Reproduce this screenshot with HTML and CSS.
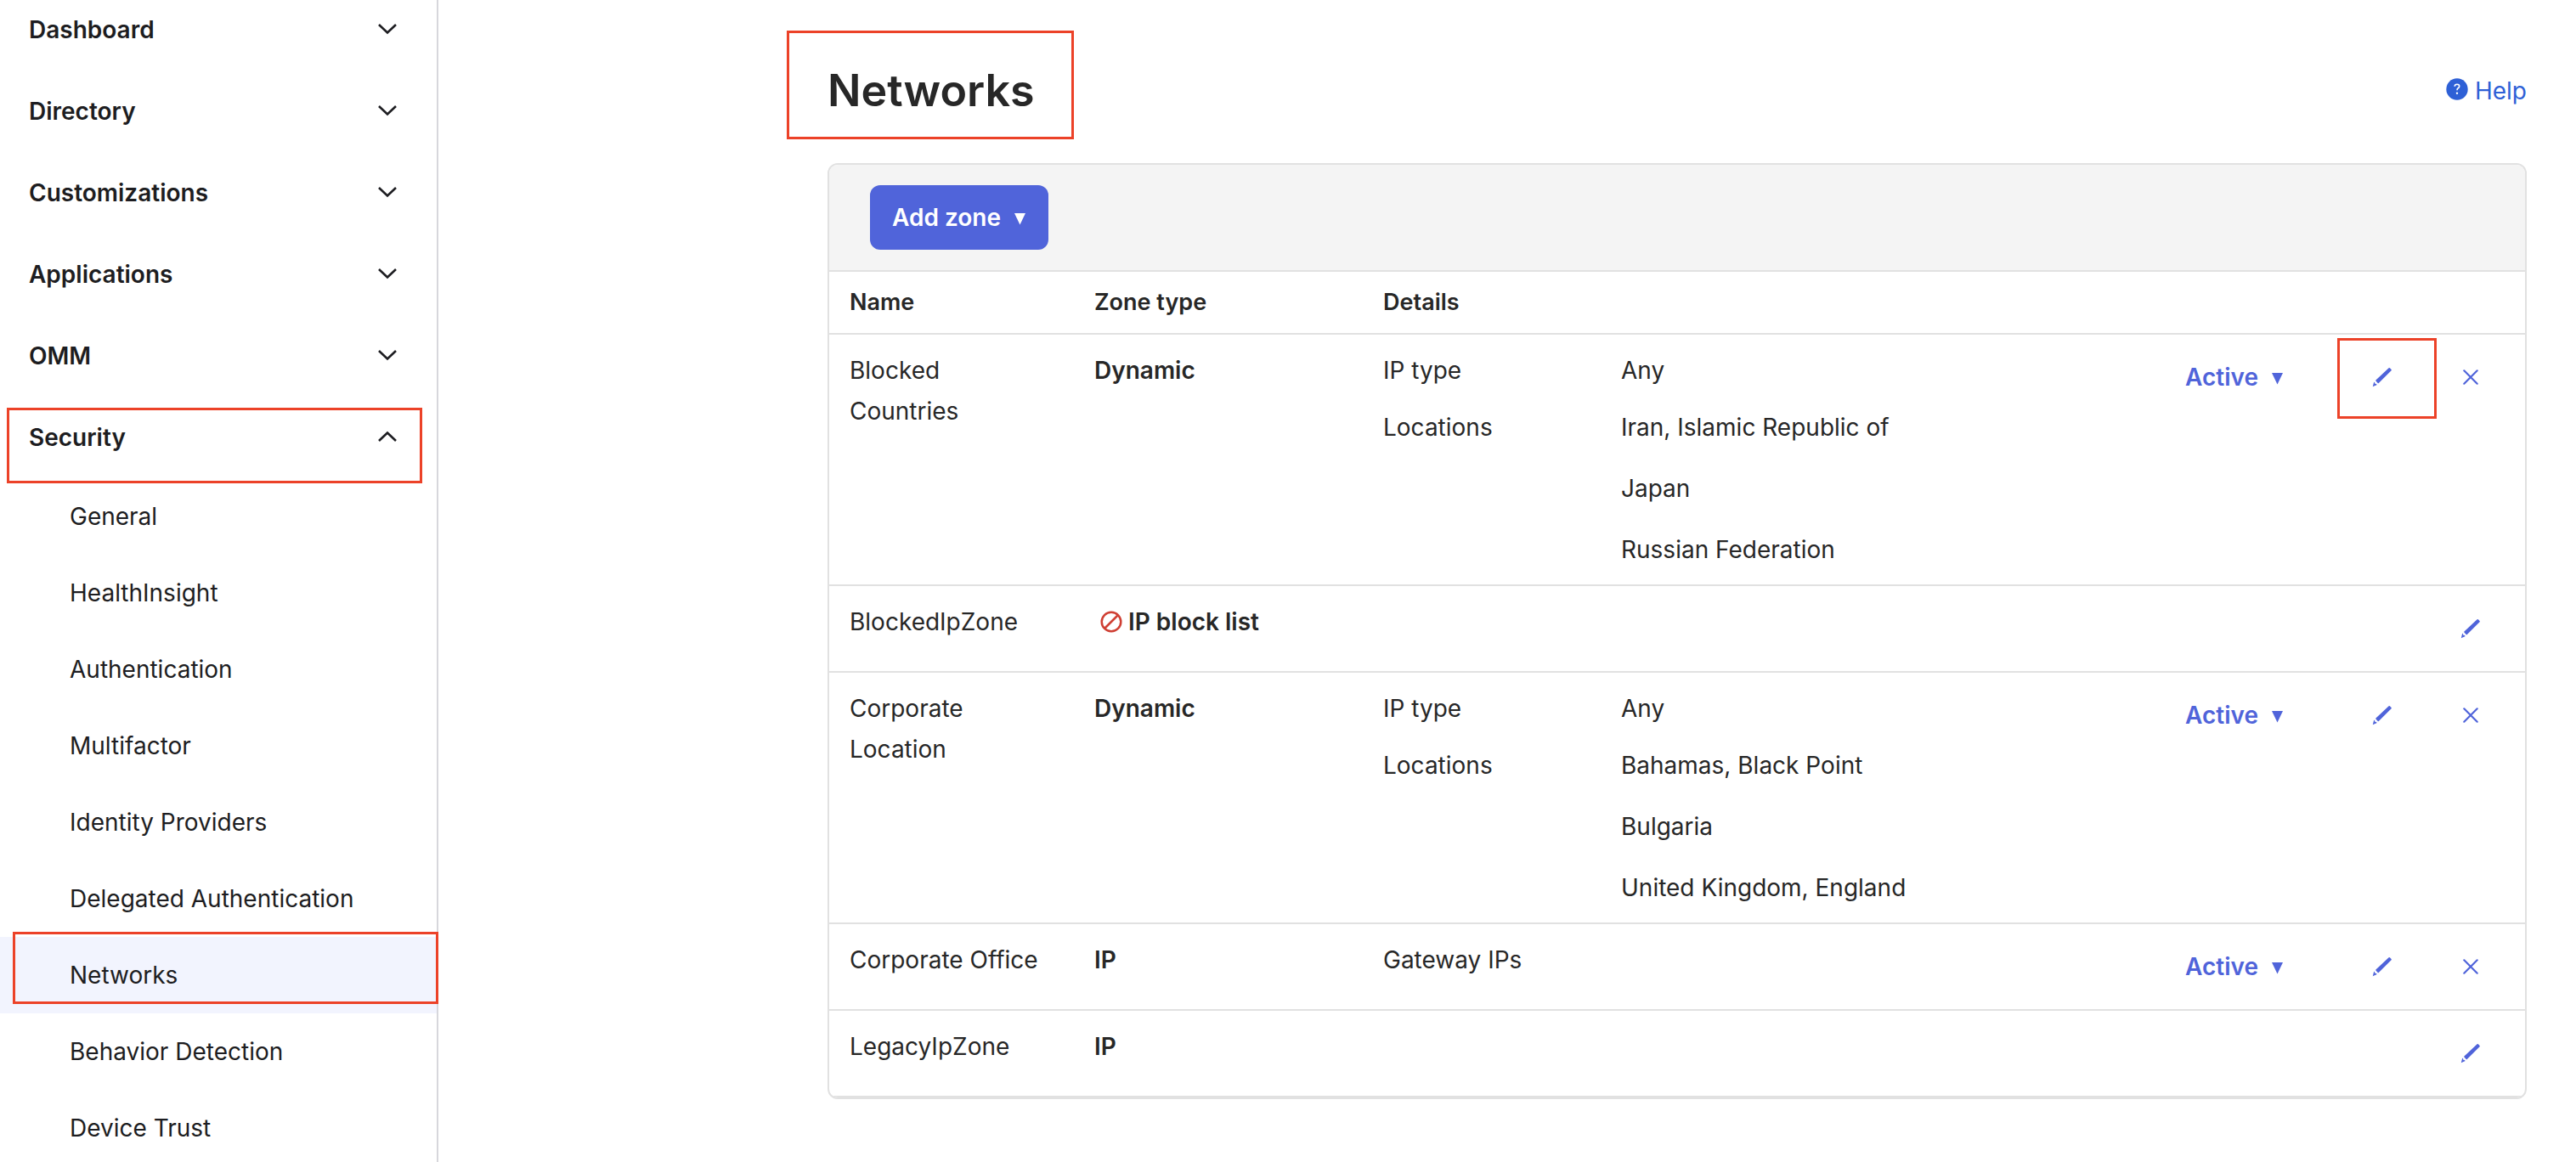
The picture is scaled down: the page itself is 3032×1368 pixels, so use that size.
FILE: index.html
```
<!DOCTYPE html>
<html lang="en">
<head>
<meta charset="UTF-8">
<meta name="viewport" content="width=device-width, initial-scale=1.0">
<title>Networks</title>
<link rel="stylesheet" href="styles.css">
</head>
<body>
<!-- Shared icons -->
<svg class="icon-defs" aria-hidden="true">
    <symbol id="chevron" viewBox="0 0 24 14">
        <path d="M2 2l10 9.500 10-9.500" fill="none" stroke="currentColor" stroke-width="2.600"/>
    </symbol>
    <symbol id="caret" viewBox="0 0 14 14">
        <path d="M0 0h13L6.500 13.500z" fill="currentColor"/>
    </symbol>
    <symbol id="pencil" viewBox="0 0 24 24">
        <path d="M19.600 1.200q.7-.6 1.300 0l1.700 1.700q.6.7 0 1.300L7.800 18.900q-.6.5-1.100 0l-2.300-2.300q-.5-.6 0-1.100z" fill="currentColor"/>
        <path d="M2.200 17.600l1.300 1.300-.3 1.200 1.300-.3 1.300 1.300L.8 23.200z" fill="currentColor"/>
    </symbol>
    <symbol id="cross" viewBox="0 0 18 18">
        <path d="M1.300 1.300l15.400 15.400M16.700 1.300L1.300 16.700" fill="none" stroke="currentColor" stroke-width="2.200" stroke-linecap="round"/>
    </symbol>
</svg>

<div class="app">
    <nav class="sidebar">
        <button class="nav-item">Dashboard <svg class="chevron"><use href="#chevron"/></svg></button>
        <button class="nav-item">Directory <svg class="chevron"><use href="#chevron"/></svg></button>
        <button class="nav-item">Customizations <svg class="chevron"><use href="#chevron"/></svg></button>
        <button class="nav-item">Applications <svg class="chevron"><use href="#chevron"/></svg></button>
        <button class="nav-item">OMM <svg class="chevron"><use href="#chevron"/></svg></button>
        <button class="nav-item open mark mark-section" aria-expanded="true">Security <svg class="chevron"><use href="#chevron"/></svg></button>
        <div class="sub-nav">
            <a href="#">General</a>
            <a href="#">HealthInsight</a>
            <a href="#">Authentication</a>
            <a href="#">Multifactor</a>
            <a href="#">Identity Providers</a>
            <a href="#">Delegated Authentication</a>
            <a href="#" class="selected mark mark-link">Networks</a>
            <a href="#">Behavior Detection</a>
            <a href="#">Device Trust</a>
        </div>
    </nav>

    <main class="content">
        <div class="page-header">
            <h1 class="mark mark-title">Networks</h1>
            <a href="#" class="help">
                <svg class="help-icon" viewBox="0 0 26 26">
                    <circle cx="13" cy="13" r="12.700" fill="currentColor"/>
                    <path d="M10.200 9.800q.1-2.500 2.800-2.500 2.700 0 2.700 2.300 0 1.400-1.400 2.200-1.300.8-1.300 2.400" fill="none" stroke="#fff" stroke-width="1.600"/>
                    <circle cx="13" cy="17.800" r="1.200" fill="#fff"/>
                </svg>
                Help
            </a>
        </div>

        <div class="panel">
            <div class="toolbar">
                <button class="btn primary">Add zone <svg class="caret"><use href="#caret"/></svg></button>
            </div>
            <table class="zones">
                <colgroup>
                    <col class="col-name">
                    <col class="col-type">
                    <col>
                    <col class="col-actions">
                </colgroup>
                <tr>
                    <th>Name</th>
                    <th>Zone type</th>
                    <th>Details</th>
                    <th></th>
                </tr>
                <tr>
                    <td>Blocked Countries</td>
                    <td class="type">Dynamic</td>
                    <td>
                        <dl>
                            <dt>IP type</dt>
                            <dd>Any</dd>
                            <dt>Locations</dt>
                            <dd>
                                <ul>
                                    <li>Iran, Islamic Republic of</li>
                                    <li>Japan</li>
                                    <li>Russian Federation</li>
                                </ul>
                            </dd>
                        </dl>
                    </td>
                    <td class="actions">
                        <div class="action-list">
                            <button class="btn status">Active <svg class="caret"><use href="#caret"/></svg></button>
                            <button class="icon-btn mark mark-edit" aria-label="Edit"><svg class="pencil"><use href="#pencil"/></svg></button>
                            <button class="icon-btn" aria-label="Delete"><svg class="cross"><use href="#cross"/></svg></button>
                        </div>
                    </td>
                </tr>
                <tr>
                    <td>BlockedIpZone</td>
                    <td class="type">
                        <div class="blocked">
                            <svg class="block-icon" viewBox="0 0 26 26">
                                <circle cx="13" cy="13" r="11.300"/>
                                <path d="M5 21L21 5"/>
                            </svg>
                            IP block list
                        </div>
                    </td>
                    <td></td>
                    <td class="actions">
                        <div class="action-list">
                            <button class="icon-btn" aria-label="Edit"><svg class="pencil"><use href="#pencil"/></svg></button>
                        </div>
                    </td>
                </tr>
                <tr>
                    <td>Corporate Location</td>
                    <td class="type">Dynamic</td>
                    <td>
                        <dl>
                            <dt>IP type</dt>
                            <dd>Any</dd>
                            <dt>Locations</dt>
                            <dd>
                                <ul>
                                    <li>Bahamas, Black Point</li>
                                    <li>Bulgaria</li>
                                    <li>United Kingdom, England</li>
                                </ul>
                            </dd>
                        </dl>
                    </td>
                    <td class="actions">
                        <div class="action-list">
                            <button class="btn status">Active <svg class="caret"><use href="#caret"/></svg></button>
                            <button class="icon-btn" aria-label="Edit"><svg class="pencil"><use href="#pencil"/></svg></button>
                            <button class="icon-btn" aria-label="Delete"><svg class="cross"><use href="#cross"/></svg></button>
                        </div>
                    </td>
                </tr>
                <tr>
                    <td>Corporate Office</td>
                    <td class="type">IP</td>
                    <td>Gateway IPs</td>
                    <td class="actions">
                        <div class="action-list">
                            <button class="btn status">Active <svg class="caret"><use href="#caret"/></svg></button>
                            <button class="icon-btn" aria-label="Edit"><svg class="pencil"><use href="#pencil"/></svg></button>
                            <button class="icon-btn" aria-label="Delete"><svg class="cross"><use href="#cross"/></svg></button>
                        </div>
                    </td>
                </tr>
                <tr>
                    <td>LegacyIpZone</td>
                    <td class="type">IP</td>
                    <td></td>
                    <td class="actions">
                        <div class="action-list">
                            <button class="icon-btn" aria-label="Edit"><svg class="pencil"><use href="#pencil"/></svg></button>
                        </div>
                    </td>
                </tr>
            </table>
        </div>
    </main>
</div>
</body>
</html>
```
FILE: styles.css
```
* {
    box-sizing: border-box;
}

body {
    margin: 0;
    font-family: Inter, "Liberation Sans", sans-serif;
    font-size: 28px;
    line-height: 48px;
    color: #272727;
    background-color: #fff;
}

button {
    font: inherit;
    border: none;
    background: none;
    cursor: pointer;
}

a {
    text-decoration: none;
}

.icon-defs {
    display: none;
}

.app {
    display: flex;
    height: 100vh;
    overflow: hidden;
}

/* Sidebar */
.sidebar {
    flex: none;
    width: 516px;
    height: max-content;
    margin-top: -13px; /* the list is scrolled a little */
    border-right: 2px solid #d7d7dc;
    color: #1d1d21;
}

.nav-item {
    display: flex;
    justify-content: space-between;
    align-items: center;
    width: 100%;
    height: 96px;
    padding: 0 46px 0 34px;
    font-weight: 600;
    color: inherit;
}

.chevron {
    width: 24px;
    height: 14px;
    margin-bottom: 3px;
}

.nav-item.open .chevron {
    transform: rotate(180deg);
}

.sub-nav a {
    display: block;
    height: 90px;
    padding-left: 82px;
    line-height: 90px;
    color: inherit;
}

.sub-nav .selected {
    background-color: #f2f4fe;
}

/* Main area */
.content {
    flex: 1;
    min-width: 0;
    padding: 0 58px 0 458px;
}

.page-header {
    display: flex;
    justify-content: space-between;
    align-items: center;
    padding: 75px 0 53px;
}

h1 {
    margin: 0;
    font-size: 52px;
    font-weight: 600;
    line-height: 64px;
}

.help {
    display: flex;
    align-items: center;
    gap: 8px;
    color: #2e60d6;
}

.help-icon {
    width: 26px;
    height: 26px;
    margin-bottom: 4px;
}

.panel {
    border: 2px solid #e1e1e1;
    border-radius: 12px;
    overflow: hidden;
}

.toolbar {
    padding: 24px 48px;
    background-color: #f4f4f4;
    border-bottom: 2px solid #e1e1e1;
}

.btn {
    display: flex;
    align-items: center;
    gap: 16px;
    height: 76px;
    padding: 0 26px;
    border-radius: 12px;
    font-weight: 600;
}

.btn.primary {
    background-color: #5064da;
    color: #fff;
}

.btn.status {
    margin-right: 26px;
    color: #5064da;
}

.caret {
    width: 14px;
    height: 14px;
    margin-top: 4px;
}

/* Zones table */
.zones {
    width: 100%;
    table-layout: fixed;
    border-collapse: separate;
    border-spacing: 0;
}

.col-name {
    width: 288px;
}

.col-type {
    width: 340px;
}

.col-actions {
    width: 450px;
}

th, td {
    padding: 18px 24px 17px;
    border-bottom: 2px solid #e1e1e1;
    text-align: left;
    vertical-align: top;
}

th {
    padding: 12px 24px;
    font-size: 27px;
    font-weight: 600;
}

td.type {
    font-weight: 600;
}

td.actions {
    padding: 12px 24px;
}

dl {
    display: grid;
    grid-template-columns: 280px 1fr;
    row-gap: 19px;
    margin: 0;
}

dd {
    margin: 0;
}

ul {
    display: grid;
    gap: 24px;
    margin: 0;
    padding: 0;
    list-style: none;
}

.blocked {
    display: flex;
    align-items: center;
    gap: 7px;
    padding-left: 7px;
}

.block-icon {
    width: 26px;
    height: 26px;
    fill: none;
    stroke: #cf3f33;
    stroke-width: 2.5px;
}

.action-list {
    display: flex;
    justify-content: flex-end;
    gap: 24px;
}

.icon-btn {
    display: flex;
    align-items: center;
    justify-content: center;
    width: 80px;
    height: 76px;
    padding: 0;
    color: #5064da;
}

.pencil {
    width: 24px;
    height: 24px;
}

.cross {
    width: 18px;
    height: 18px;
}

/* Red callout boxes */
.mark {
    position: relative;
}

.mark::after {
    content: "";
    position: absolute;
    z-index: 1;
    border: 3px solid #ec4228;
}

.mark-section::after {
    inset: 13px 17px -6px 8px;
}

.mark-link::after {
    inset: -6px -2px 11px 15px;
}

.mark-title::after {
    inset: -39px -46px -25px -48px;
}

.mark-edit::after {
    inset: -8px -24px -11px -13px;
}
```
